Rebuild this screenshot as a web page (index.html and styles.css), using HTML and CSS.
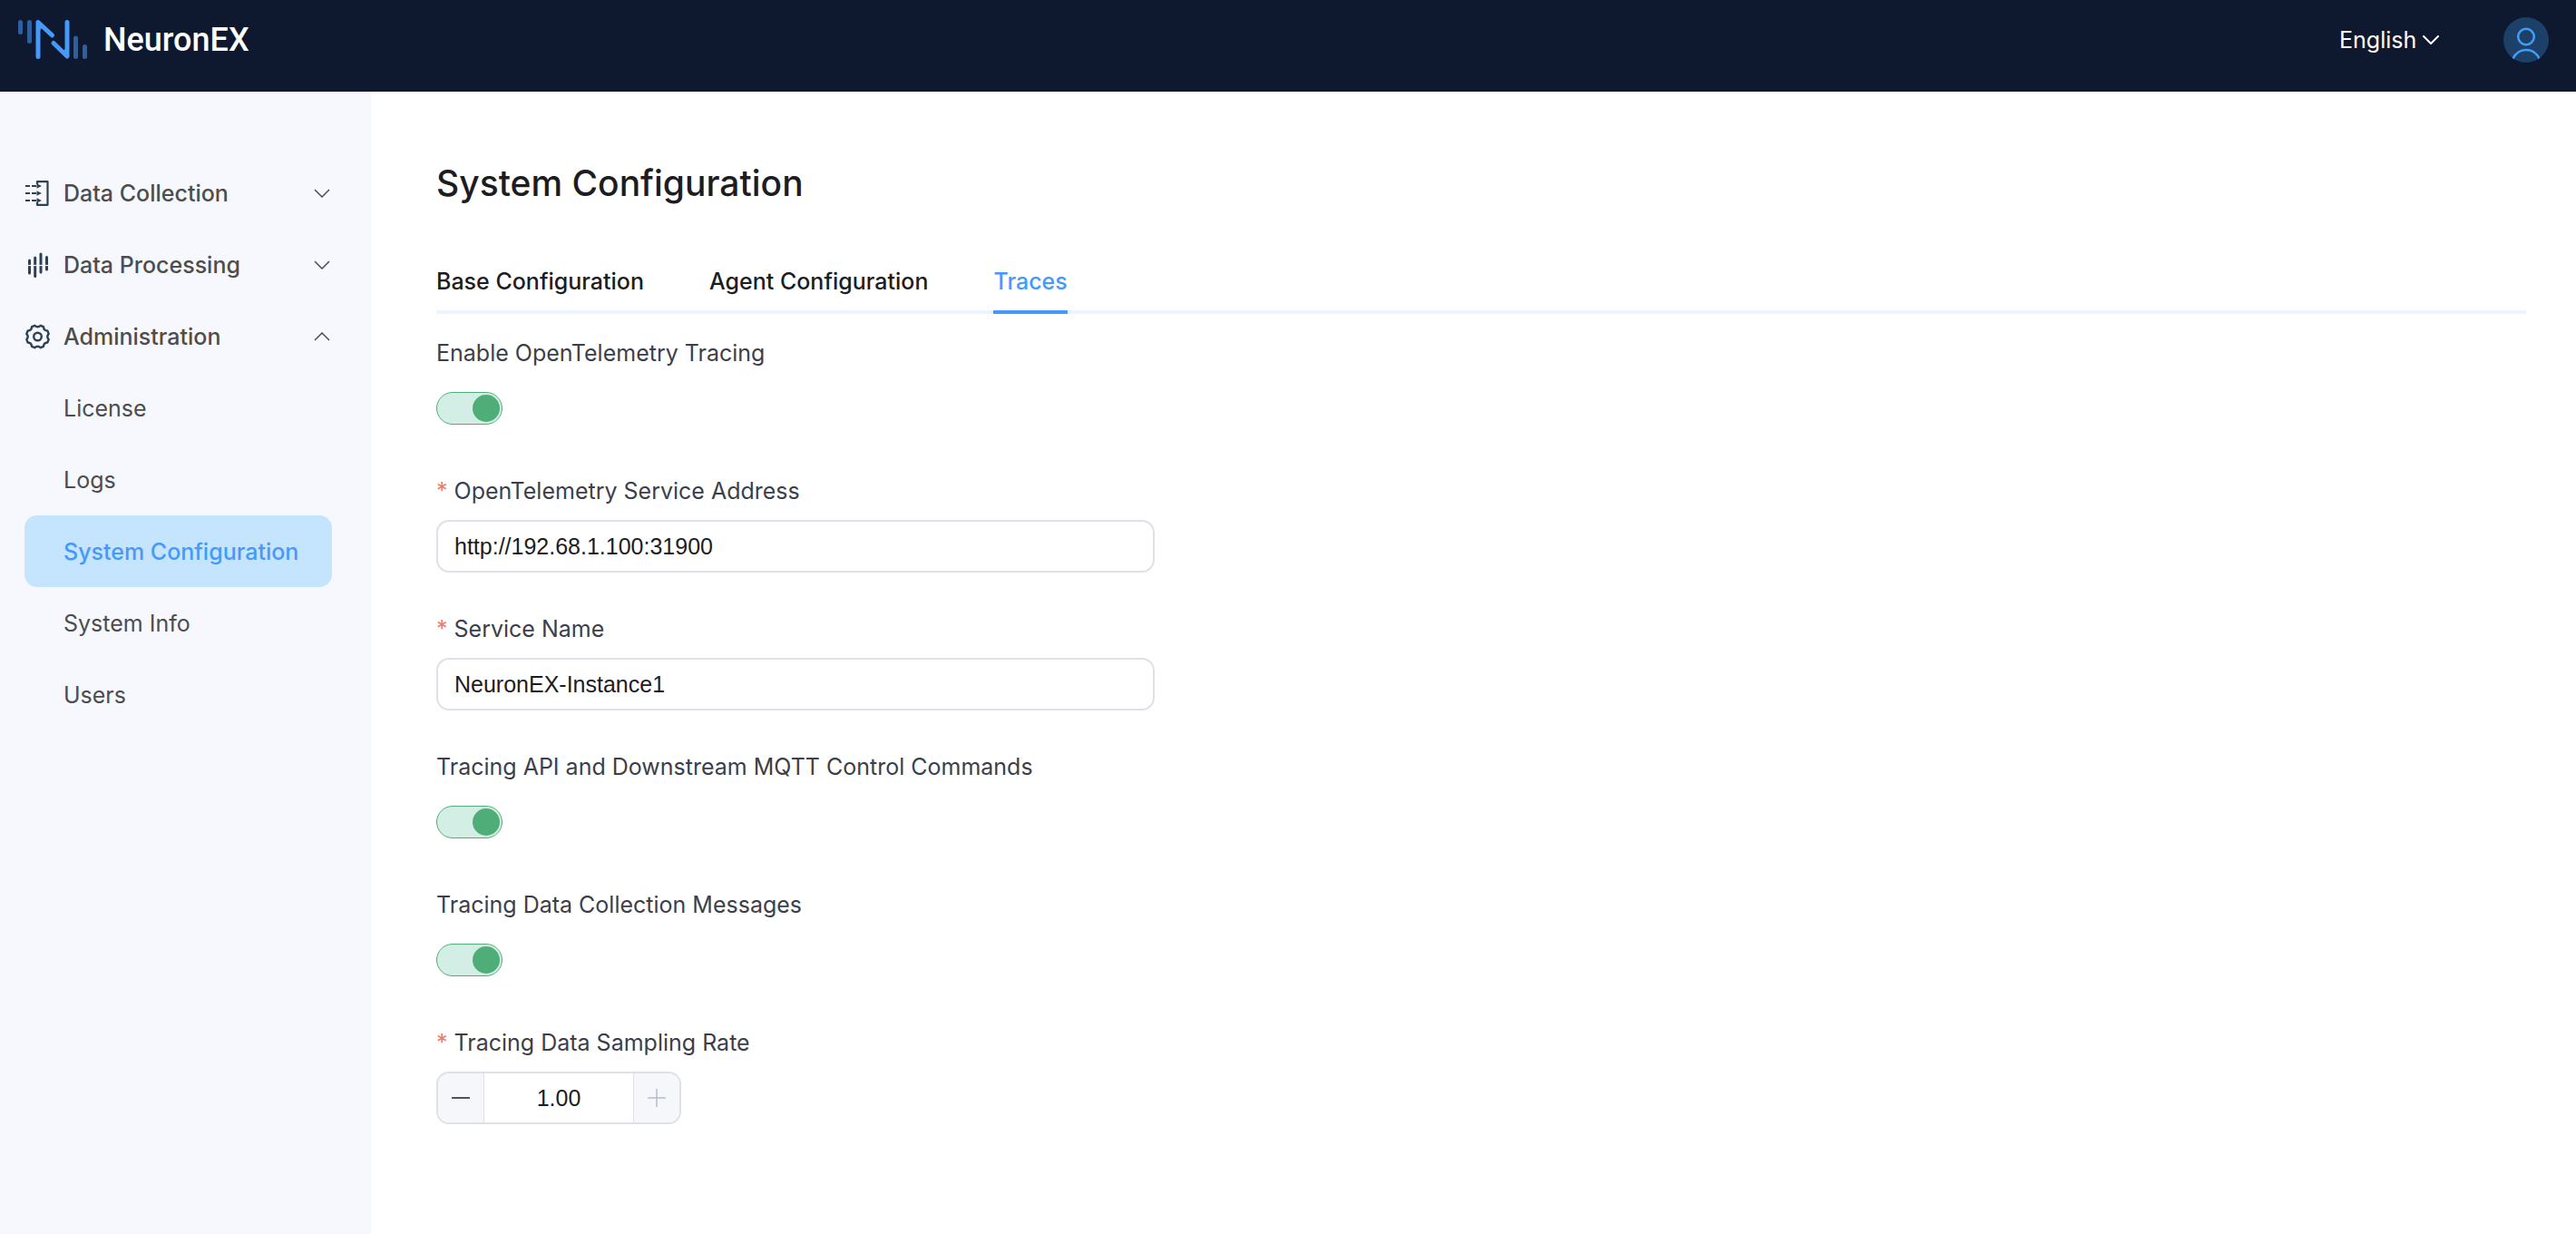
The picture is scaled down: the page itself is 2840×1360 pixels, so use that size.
FILE: index.html
```html
<!DOCTYPE html>
<html lang="en">
<head>
<meta charset="utf-8">
<title>NeuronEX</title>
<meta name="viewport" content="width=device-width, initial-scale=1">
<link rel="stylesheet" href="styles.css">
</head>
<body>
<header class="topbar">
  <a class="brand" href="#">
    <svg class="brand-mark" width="76" height="44" viewBox="0 0 76 44" fill="none" stroke="#4599fa" stroke-width="5" stroke-linecap="round" aria-hidden="true">
      <g stroke="#2e609f"><path d="M2.500 2.500V13.500M12.500 2.500V23.500M63.500 20V40.500M73.500 29.500V40.500"/></g>
      <path stroke-linejoin="round" d="M22 40.500V2.500L37.500 16.800M39 25.500L54 40V2.500"/>
      <path fill="#4599fa" stroke="none" d="M22 2L28 7.500L24 11ZM54 41L48 35.500L52 32Z"/>
    </svg>
    <span class="brand-name">NeuronEX</span>
  </a>
  <div class="topbar-actions">
    <div class="language">
      <select class="language-select" aria-label="Language"><option>English</option></select>
      <svg width="18" height="10" viewBox="0 0 18 10" fill="none" stroke="#fff" stroke-width="2" stroke-linecap="round" stroke-linejoin="round" aria-hidden="true"><path d="M1 1L9 9L17 1"/></svg>
    </div>
    <button class="avatar" type="button" aria-label="Account">
      <svg width="50" height="50" viewBox="0 0 50 50" fill="none" stroke="#409eff" stroke-width="2.500" aria-hidden="true"><circle cx="25" cy="21.500" r="8.800"/><path d="M10.200 46Q15 36 25 36T39.800 46"/></svg>
    </button>
  </div>
</header>
<div class="shell">
  <nav class="sidebar" aria-label="Main">
    <button class="nav-group" type="button" aria-expanded="false">
      <svg class="nav-icon" width="28" height="30" viewBox="0 0 28 30" fill="none" stroke="#2c4156" stroke-width="2.200" aria-hidden="true">
        <path stroke-linejoin="round" d="M14 5V2.200H25.500V27.800H14V25"/>
        <path d="M1 7H6M8 7H13M1 15H6M8 15H13M1 23H6M8 23H13"/>
        <path fill="#2c4156" stroke="none" d="M13.500 4.300V9.700L19 7ZM13.500 12.300V17.700L19 15ZM13.500 20.300V25.700L19 23Z"/>
      </svg>
      <span class="nav-text">Data Collection</span>
      <svg class="nav-arrow" width="18" height="10" viewBox="0 0 18 10" aria-hidden="true"><path d="M1 1L9 9L17 1"/></svg>
    </button>
    <button class="nav-group" type="button" aria-expanded="false">
      <svg class="nav-icon" width="28" height="30" viewBox="0 0 28 30" fill="none" stroke="#2c4156" stroke-width="3" stroke-linecap="round" aria-hidden="true">
        <path d="M5.500 10V24M11.700 7V27.500M18 3V23M24.500 6.500V20"/>
        <path stroke="#f7f8fd" stroke-width="1.200" stroke-linecap="butt" d="M3 15.500H27"/>
      </svg>
      <span class="nav-text">Data Processing</span>
      <svg class="nav-arrow" width="18" height="10" viewBox="0 0 18 10" aria-hidden="true"><path d="M1 1L9 9L17 1"/></svg>
    </button>
    <button class="nav-group" type="button" aria-expanded="true">
      <svg class="nav-icon" width="28" height="30" viewBox="0 0 28 30" fill="none" stroke="#2c4156" stroke-width="2.400" stroke-linejoin="round" aria-hidden="true">
        <circle cx="14.500" cy="15" r="4.300"/>
        <path d="M11.400 2.800Q14.500 5.600 17.600 2.800L21 4.200Q21.200 8.300 25.300 8.500L26.700 11.900Q23.900 15 26.700 18.100L25.300 21.500Q21.200 21.700 21 25.800L17.600 27.200Q14.500 24.400 11.400 27.200L8 25.800Q7.800 21.700 3.700 21.500L2.300 18.100Q5.100 15 2.300 11.900L3.700 8.500Q7.800 8.300 8 4.200Z"/>
      </svg>
      <span class="nav-text">Administration</span>
      <svg class="nav-arrow" width="18" height="10" viewBox="0 0 18 10" aria-hidden="true"><path d="M1 9L9 1L17 9"/></svg>
    </button>
    <a class="nav-link" href="#">License</a>
    <a class="nav-link" href="#">Logs</a>
    <a class="nav-link nav-link-active" href="#" aria-current="page">System Configuration</a>
    <a class="nav-link" href="#">System Info</a>
    <a class="nav-link" href="#">Users</a>
  </nav>
  <main class="content">
    <h1 class="page-title">System Configuration</h1>
    <div class="tabs" role="tablist">
      <button class="tab" type="button" role="tab" aria-selected="false">Base Configuration</button>
      <button class="tab" type="button" role="tab" aria-selected="false">Agent Configuration</button>
      <button class="tab tab-active" type="button" role="tab" aria-selected="true">Traces</button>
    </div>
    <form class="form">
      <div class="field">
        <label class="field-label" for="enable">Enable OpenTelemetry Tracing</label>
        <div class="field-control"><input class="switch" id="enable" type="checkbox" role="switch" checked></div>
      </div>
      <div class="field">
        <label class="field-label field-required" for="address">OpenTelemetry Service Address</label>
        <div class="field-control"><input class="text-input" id="address" type="text" value="http://192.68.1.100:31900"></div>
      </div>
      <div class="field">
        <label class="field-label field-required" for="service">Service Name</label>
        <div class="field-control"><input class="text-input" id="service" type="text" value="NeuronEX-Instance1"></div>
      </div>
      <div class="field">
        <label class="field-label" for="control">Tracing API and Downstream MQTT Control Commands</label>
        <div class="field-control"><input class="switch" id="control" type="checkbox" role="switch" checked></div>
      </div>
      <div class="field">
        <label class="field-label" for="messages">Tracing Data Collection Messages</label>
        <div class="field-control"><input class="switch" id="messages" type="checkbox" role="switch" checked></div>
      </div>
      <div class="field">
        <label class="field-label field-required" for="rate">Tracing Data Sampling Rate</label>
        <div class="field-control">
          <div class="stepper">
            <button class="step" type="button" aria-label="Decrease"><svg width="20" height="20" viewBox="0 0 20 20" fill="none" stroke="#1d1d1f" stroke-width="1.500" aria-hidden="true"><path d="M0 10H20"/></svg></button>
            <input class="step-value" id="rate" type="number" min="0" max="1" step="0.01" value="1.00">
            <button class="step" type="button" aria-label="Increase" disabled><svg width="20" height="20" viewBox="0 0 20 20" fill="none" stroke="#b4bccc" stroke-width="1.500" aria-hidden="true"><path d="M0 10H20M10 0V20"/></svg></button>
          </div>
        </div>
      </div>
    </form>
  </main>
</div>
</body>
</html>
```
FILE: styles.css
```css
* { box-sizing: border-box; }

body {
  margin: 0;
  min-height: 100vh;
  display: flex;
  flex-direction: column;
  background: #fff;
  color: #1d1d1f;
  font-family: Inter, "Liberation Sans", sans-serif;
  font-size: 25px;
}

button, input, select {
  margin: 0;
  padding: 0;
  border: 0;
  background: none;
  color: inherit;
  font: inherit;
}

a { color: inherit; text-decoration: none; }

svg { display: block; flex: none; }

.topbar {
  display: flex;
  align-items: center;
  justify-content: space-between;
  height: 101px;
  padding: 0 30px 14px 20px;
  background: #0e182f;
  color: #fff;
}

.brand { display: flex; align-items: center; gap: 18px; }

.brand-name { font-family: Roboto, sans-serif; font-size: 36px; font-weight: 500; }

.topbar-actions { display: flex; align-items: center; gap: 71px; }

.language { display: flex; align-items: center; gap: 6px; }

.language-select { appearance: none; }

.avatar { border-radius: 50%; background: #1d4069; overflow: hidden; }

.shell { display: flex; flex: 1; }

.sidebar {
  flex: none;
  width: 409px;
  padding: 72px 43px 0 27px;
  background: #f7f8fd;
  color: #4d4d4d;
}

.nav-group, .nav-link {
  display: flex;
  align-items: center;
  width: 100%;
  height: 79px;
  border-radius: 14px;
}

.nav-group { gap: 15px; padding-right: 2px; font-weight: 500; }

.nav-text { flex: 1; text-align: left; }

.nav-arrow { fill: none; stroke: #4d4d4d; stroke-width: 1.500; }

.nav-link { padding-left: 43px; }

.nav-link-active { background: #c5e4fe; color: #4599fa; font-weight: 500; }

.content { flex: 1; padding: 71px 55px 72px 72px; }

.page-title { margin: 0; font-size: 39px; line-height: 60px; font-weight: 500; }

.tabs {
  display: flex;
  gap: 72px;
  margin-top: 45px;
  background: linear-gradient(#ecf5ff, #ecf5ff) bottom / 100% 4px no-repeat;
}

.tab { padding: 16px 0 15px; line-height: 34px; font-weight: 500; border-bottom: 4px solid transparent; }

.tab-active { color: #4599fa; border-color: #4599fa; }

.form { display: flex; flex-direction: column; gap: 40px; padding-top: 21px; }

.field { display: flex; flex-direction: column; gap: 10px; max-width: 792px; }

.field-label { line-height: 44px; color: #3c3f4b; }

.field-required::before { content: "*"; margin-right: 7px; color: #f17775; }

.field-control { display: flex; align-items: center; height: 58px; }

.text-input, .step-value { font-family: "Liberation Sans", sans-serif; }

.text-input {
  width: 100%;
  height: 58px;
  padding: 0 18px;
  border: 2px solid #dfe0e8;
  border-radius: 14px;
}

.switch {
  appearance: none;
  display: flex;
  align-items: center;
  justify-content: flex-end;
  width: 73px;
  height: 36px;
  padding: 0 2px;
  border: 1px solid #4fae78;
  border-radius: 18px;
  background: #d3eee4;
}

.switch::before { content: ""; width: 30px; height: 30px; border-radius: 50%; background: #4fae78; }

.stepper {
  display: flex;
  width: 270px;
  height: 58px;
  border: 2px solid #dfe0e8;
  border-radius: 14px;
  overflow: hidden;
}

.step { display: flex; align-items: center; justify-content: center; flex: none; width: 50px; background: #f5f7fb; }

.step-value {
  flex: 1;
  min-width: 0;
  border: solid #dfe0e8;
  border-width: 0 1px;
  text-align: center;
  appearance: textfield;
}

.step-value::-webkit-inner-spin-button { appearance: none; }
```
